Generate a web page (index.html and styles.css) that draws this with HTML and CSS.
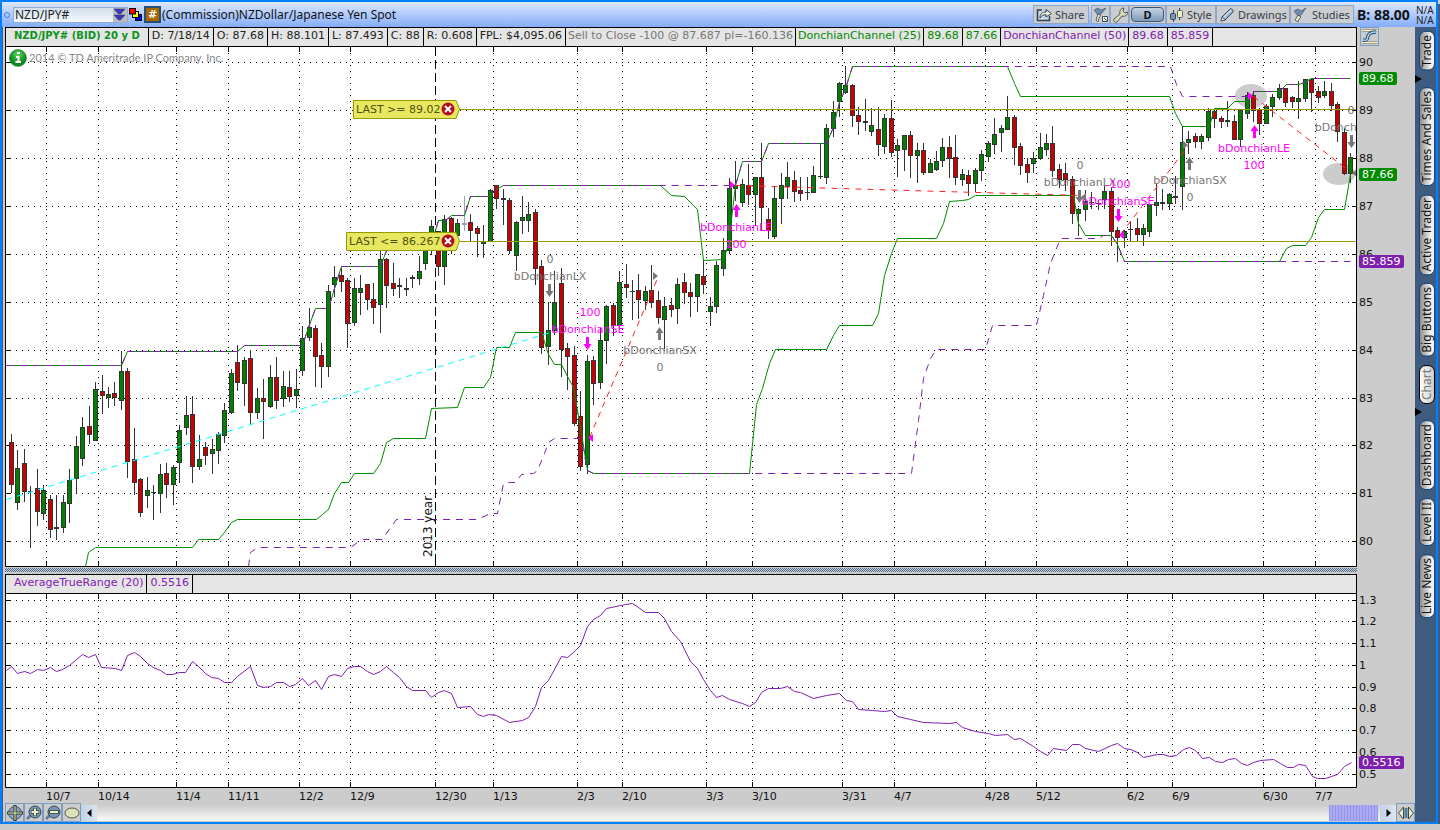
FILE: index.html
```html
<!DOCTYPE html>
<html lang="en">
<head>
<meta charset="utf-8">
<title>NZD/JPY# Chart</title>
<link rel="stylesheet" href="styles.css">
</head>
<body>
<div class="window">
  <header class="titlebar">
    <span class="link-dot"></span>
    <div class="symbol">
      <input class="symbol-input" type="text" value="NZD/JPY#" aria-label="Symbol">
      <button class="symbol-drop" aria-label="Symbol list"><svg width="13" height="13" viewBox="0 0 13 13"><path d="M1 1h11l-4.500 5h-2zM1 7h11l-4.500 5h-2z" fill="#3a3ab8" stroke="#2a2a80" stroke-width=".5"/></svg></button>
    </div>
    <svg class="squares" width="13" height="13" viewBox="0 0 13 13"><rect x="6.500" y="6.500" width="6" height="6" fill="#00f" stroke="#000"/><rect x="3.500" y="3.500" width="6" height="6" fill="#ff0" stroke="#000"/><rect x=".5" y=".5" width="6" height="5.500" fill="#f00" stroke="#000"/></svg>
    <button class="hash">#</button>
    <h1 class="title">(Commission)NZDollar/Japanese Yen Spot</h1>
    <nav class="tools">
      <button class="tool share"><svg width="16" height="14" viewBox="0 0 16 14"><path d="M6 2H1.500v10.500h12V8" fill="#c9d6e4" stroke="#2d4256" stroke-width="1.500"/><path d="M4 10c0-4 2-6 6-6V1.500L15.300 5.500 10 9V6.700c-3 0-4.500 1-6 3.300z" fill="#f2f4dc" stroke="#2d4256"/></svg>Share</button>
      <button class="tool icon" aria-label="Edit studies"><svg width="16" height="16" viewBox="0 0 16 16"><path d="M1 3l4-2 3 2 5-2-5 6-3 1z" fill="#6f8ca8" stroke="#4a6178" stroke-width=".8"/><path d="M5 7l3 1-2 3-1 4-2-2z" fill="#e8ecc4" stroke="#31475c" stroke-width=".8"/><path d="M9.500 9.500h5v5h-5z" fill="#f4f4d8" stroke="#31475c"/><path d="M11 11l2.500 2.500" stroke="#31475c"/></svg></button>
      <button class="tool icon" aria-label="Settings"><svg width="16" height="16" viewBox="0 0 16 16"><path d="M2 12l6-5c-1-3 1-6 4-6l-1 3 2 2 3-1c0 3-3 5-6 4l-5 6c-2 1-4-1-3-3z" fill="#d8dcb4" stroke="#4d5b62"/></svg></button>
      <button class="tool period"><span>D</span></button>
      <button class="tool style-btn"><svg width="15" height="16" viewBox="0 0 15 16"><path d="M4.500 3v12M10.500 1v12" stroke="#31475c"/><rect x="1.500" y="6.500" width="5" height="6" rx="1" fill="#7795b2" stroke="#31475c"/><rect x="8.500" y="3.500" width="5" height="7" rx="1" fill="#eceec8" stroke="#5a6a60"/></svg>Style</button>
      <button class="tool drawings"><svg width="16" height="16" viewBox="0 0 16 16"><path d="M2 14l1-4 8-8c1-1 4 1 3 3l-8 8z" fill="#9fb9d4" stroke="#31475c"/><path d="M2 14l1-4 3 3z" fill="#f2e8c4" stroke="#31475c" stroke-width=".7"/><path d="M5 10l7-7" stroke="#e6f0fa"/></svg>Drawings</button>
      <button class="tool studies"><svg width="16" height="16" viewBox="0 0 16 16"><path d="M1 4l4-2 3 2 5-3-5 7-3 1z" fill="#6f8ca8" stroke="#4a6178" stroke-width=".8"/><path d="M5 8l3 2-2 2-1 3-3-2z" fill="#e8ecc4" stroke="#31475c" stroke-width=".8"/></svg>Studies</button>
    </nav>
    <strong class="bid">B: 88.00</strong>
    <div class="na"><span>N/A</span><span>N/A</span></div>
  </header>

  <main class="body">
    <section class="charts">
      <div class="inforow">
        <div class="info">
          <span class="cell sym">NZD/JPY# (BID) 20 y D</span><span class="cell">D: 7/18/14</span><span class="cell">O: 87.68</span><span class="cell">H: 88.101</span><span class="cell">L: 87.493</span><span class="cell">C: 88</span><span class="cell">R: 0.608</span><span class="cell">FPL: $4,095.06</span><span class="cell tight dim">Sell to Close -100 @ 87.687 pl=-160.136</span><span class="cell tight green">DonchianChannel (25)</span><span class="cell green">89.68</span><span class="cell green">87.66</span><span class="cell tight purple">DonchianChannel (50)</span><span class="cell purple">89.68</span><span class="cell purple">85.859</span>
        </div>
        <div class="corner"><button class="scale-btn" aria-label="Fit scale"><svg width="17" height="17" viewBox="0 0 17 17"><path d="M1 2.500h15M1 14.500h15" stroke="#6b7458" stroke-width="2"/><path d="M1 2.500h15M1 14.500h15" stroke="#f4f4c8"/><path d="M2 12c5 1 4-1 5-4s3-4 8-4" fill="none" stroke="#27506f" stroke-width="3.500"/><path d="M2 12c5 1 4-1 5-4s3-4 8-4" fill="none" stroke="#a9d2ee" stroke-width="1.500"/></svg></button></div>
      </div>
      <svg class="plot" id="price" viewBox="5 47 1410 520"></svg>
      <div class="splitter"></div>
      <div class="inforow lower">
        <div class="info"><span class="cell purple first">AverageTrueRange (20)</span><span class="cell purple">0.5516</span></div>
        <div class="corner"></div>
      </div>
      <svg class="plot" id="atr" viewBox="5 594 1410 209"></svg>
      <footer class="bottombar">
        <button class="zoom" aria-label="Crosshair"><svg width="16" height="16" viewBox="0 0 16 16"><circle cx="8" cy="8" r="6.500" fill="#8ba3bb" stroke="#3b5066"/><path d="M8 0v16M0 8h16" stroke="#2f3d33" stroke-width="3"/><path d="M8 1v14M1 8h14" stroke="#eef0c8"/></svg></button>
        <button class="zoom" aria-label="Zoom in"><svg width="16" height="16" viewBox="0 0 16 16"><path d="M1 14l4-4" stroke="#5f7f9f" stroke-width="3"/><circle cx="9" cy="7" r="6" fill="#7896b4" stroke="#33475c"/><path d="M9 3v8M5 7h8" stroke="#33473c" stroke-width="3.500"/><path d="M9 3.500v7M5.500 7h7" stroke="#eef0c8" stroke-width="2"/></svg></button>
        <button class="zoom" aria-label="Zoom out"><svg width="16" height="16" viewBox="0 0 16 16"><path d="M1 14l4-4" stroke="#5f7f9f" stroke-width="3"/><circle cx="9" cy="7" r="6" fill="#7896b4" stroke="#33475c"/><path d="M4 7h10" stroke="#33473c" stroke-width="3.500"/><path d="M5 7h8" stroke="#eef0c8" stroke-width="2"/></svg></button>
        <button class="zoom" aria-label="Pan"><svg width="16" height="16" viewBox="0 0 16 16"><ellipse cx="8" cy="8" rx="7" ry="5" fill="#dde2b8" stroke="#4b5a4b"/></svg></button>
        <button class="arrow" aria-label="Scroll left"><svg width="5" height="8" viewBox="0 0 5 8"><path d="M4.500 0v8L0 4z" fill="#000"/></svg></button>
        <div class="track"><div class="thumb"></div></div>
        <button class="arrow" aria-label="Scroll right"><svg width="5" height="8" viewBox="0 0 5 8"><path d="M.5 0v8L5 4z" fill="#000"/></svg></button>
        <button class="zoom last" aria-label="Expansion"><svg width="16" height="14" viewBox="0 0 16 14"><path d="M5.500 1v12L.5 7zM10.500 1v12l5-6z" fill="#eaeec8" stroke="#3c4a44"/><path d="M8 2v10" stroke="#4f7ba5" stroke-width="3"/></svg></button>
      </footer>
    </section>
    <aside class="tabs">
      <button class="tab">Trade</button>
      <span class="marker"></span>
      <button class="tab">Times And Sales</button>
      <button class="tab">Active Trader</button>
      <button class="tab">Big Buttons</button>
      <button class="tab active">Chart</button>
      <span class="marker"></span>
      <button class="tab">Dashboard</button>
      <button class="tab">Level II</button>
      <button class="tab">Live News</button>
    </aside>
  </main>
</div>
<script src="chart.js"></script>
</body>
</html>
```
FILE: styles.css
```css
* { box-sizing: border-box; }
body { margin: 0; background: #ccc; font-family: "DejaVu Sans", sans-serif; font-size: 11px; color: #222; }
button { font: inherit; margin: 0; padding: 0; border: 0; background: none; color: inherit; }
svg { display: block; flex: none; }
.window { margin-right: 2px; border: 2px solid #0080ff; box-shadow: 0 4px 0 #3f5c80, 2px 4px 0 #3f5c80, inset 1px 0 0 #3f5c80; background: #ccc; }

.titlebar { display: flex; align-items: center; height: 25px; padding-left: 2px; background: linear-gradient(#dce8ff, #84adf8); font-family: "Noto Sans", sans-serif; font-size: 12px; }
.link-dot { width: 6px; height: 6px; border: 1px solid #3f84dc; border-radius: 50%; }
.symbol { display: flex; align-items: center; width: 115px; height: 16px; margin-left: 3px; margin-right: 1px; border: 1px solid #91acd0; background: linear-gradient(#d4dfeb, #f4f8fc); }
.symbol-input { flex: 1; min-width: 0; height: 14px; padding: 0 1px; border: 0; background: none; font: 12px "Noto Sans", sans-serif; color: #222; }
.symbol-drop { width: 14px; height: 14px; background: #bcbcbc; }
.hash { width: 17px; height: 17px; margin: 0 1px 0 2px; border: 2px solid #274d78; background: #a86800; color: #fff; font: bold 11px/12px "DejaVu Sans", sans-serif; }
.title { flex: 1; margin: 0; font-size: 12px; font-weight: normal; white-space: nowrap; color: #111; }
.tools { display: flex; }
.tool { display: flex; align-items: center; gap: 3px; height: 19px; border: 1px solid #8fa6c4; background: #cbcdd0; color: #333d4a; font-size: 11px; white-space: nowrap; padding: 0 2px; }
.share { width: 56px; margin-right: 2px; }
.tool.icon { width: 19px; padding: 0 1px; }
.period { width: 37px; padding: 0; }
.period span { width: 33px; height: 15px; margin: 0 auto; border: 1px solid #3f5770; border-radius: 4px; background: linear-gradient(#c4d2e2, #7f9cba); color: #111; font-weight: bold; line-height: 13px; }
.style-btn { width: 50px; }
.drawings { width: 74px; }
.studies { width: 64px; }
.bid { width: 62px; padding-left: 3px; font-size: 14px; color: #111; white-space: nowrap; }
.na { display: flex; flex-direction: column; width: 20px; font-size: 10px; line-height: 10px; }

.body { display: flex; }
.charts { flex: 1; min-width: 0; padding-left: 3px; }
.inforow { display: flex; height: 20px; }
.info { flex: 1; display: flex; min-width: 0; border: 1px solid #000; background: #e5e5e5; overflow: hidden; }
.cell { padding: 0 3px; border-right: 1px solid #000; line-height: 16px; white-space: nowrap; }
.tight { padding: 0 2px; }
.sym { padding: 0 8px; font-size: 10px; font-weight: bold; color: #0b9420; }
.first { padding-left: 8px; }
.dim { color: #777; }
.green { color: #008a00; }
.purple { color: #8020b0; }
.corner { width: 58px; padding-left: 3px; }
.scale-btn { width: 19px; height: 19px; border: 1px solid #7f9dc0; }
.plot { width: 100%; height: auto; }
.plot text { font-family: "DejaVu Sans", sans-serif; font-size: 11px; }
.plot .note { font-family: Lato, sans-serif; fill: #888; }
.plot .year { font-size: 12px; }
.splitter { height: 4px; margin: 1px 58px 2px 0; background: repeating-conic-gradient(#4d6c94 0 25%, #ccc 0 50%) 0 0 / 2px 2px; }

.bottombar { display: flex; align-items: center; height: 19px; }
.zoom { display: flex; align-items: center; justify-content: center; width: 19px; height: 19px; border: 1px solid #7f9dc0; }
.arrow { display: flex; align-items: center; justify-content: center; width: 16px; height: 16px; background: linear-gradient(90deg, #c3d2e6, #dbe5f1); }
.track { flex: 1; height: 16px; display: flex; justify-content: flex-end; padding-right: 2px; background: linear-gradient(#ccc, #fbfbfb); }
.thumb { width: 49px; background: repeating-linear-gradient(90deg, #9494e8 0 1px, #ababf4 1px 3px); }

.tabs { display: flex; flex-direction: column; align-items: center; gap: 8px; width: 21px; padding-top: 4px; padding-left: 3px; background: #3f5c80; }
.tab { width: 16px; padding: 3px 0; border: 1px solid #14457a; border-radius: 7px; background: linear-gradient(90deg, #f4f4f4 20%, #8f8f8f); writing-mode: vertical-rl; transform: rotate(180deg); font: 12px/14px "Noto Sans", sans-serif; color: #111; white-space: nowrap; }
.tab.active { border-color: #000; background: linear-gradient(90deg, #ccc, #fff); color: #777; }
.marker { align-self: flex-start; width: 0; height: 0; margin: -4px 0 -4px -3px; border: 4px solid transparent; border-left: 7px solid #000; border-right: 0; }
```
FILE: chart.js
```js
// Candles: high, body top, body bottom, low, kind (g up, r down, d flat, s pale)
const candles = `434 443 485 493r,450 469 503 510g,449 464 492 502r,486 491 492 548d,469 489 512 526r,485 491 514 520g,495 500 530 538r,495 527 529 540d,495 503 528 533g,469 481 504 523g,436 447 479 493g,417 428 459 466g,406 427 435 444r,382 390 441 441g,375 392 396 414r,387 395 398 408g,382 394 398 406r,351 372 401 410g,368 372 462 478r,428 460 483 495r,478 480 513 517r,477 491 496 508g,485 492 493 520d,464 475 494 513g,463 474 485 498r,465 468 485 505g,425 431 463 483g,396 416 428 435g,396 415 467 483r,435 460 467 470g,442 448 456 465r,439 450 454 474g,432 435 451 464g,403 411 436 443g,369 374 413 414g,345 363 383 391r,357 361 384 406g,350 359 413 424r,388 399 413 419g,379 399 402 439r,365 378 407 408g,357 378 401 409r,371 387 399 407g,371 388 397 402r,369 390 396 408g,
326 339 371 376g,308 328 338 341g,325 329 357 387r,343 356 367 388r,285 292 367 377g,266 278 285 297g,268 276 282 292r,278 281 324 348r,278 289 323 326g,275 289 293 315g,284 285 300 310r,283 300 308 324r,250 260 305 333g,258 260 286 308r,263 284 289 296r,278 285 287 298d,278 288 290 296d,275 277 279 288d,256 272 279 285g,245 248 264 270g,220 227 250 255g,232 232 267 276r,215 220 267 285g,217 219 245 254r,219 224 236 240g,196 223 225 231s,214 223 231 242r,226 229 234 257r,225 242 244 258g,189 191 242 242g,185 186 199 209r,189 198 200 225d,198 201 251 254r,221 223 256 271g,196 218 221 234g,202 215 221 232g,209 213 269 285r,
260 267 348 354r,302 331 347 365g,271 303 331 335g,268 284 350 377r,343 349 357 390r,346 356 424 426r,391 417 467 471r,355 362 465 474g,356 361 384 405r,328 341 383 389g,305 307 341 364g,303 306 326 336r,271 283 326 330g,264 285 288 298r,280 291 292 320d,274 291 300 319r,286 292 301 310g,265 291 303 308r,291 301 318 324r,297 307 320 349g,298 306 310 317r,278 285 309 324g,273 283 293 304r,283 293 297 317r,275 275 297 312g,260 277 285 294r,297 307 312 326g,261 266 307 313g,
238 251 269 276g,178 189 251 254g,161 186 189 201g,179 185 203 207g,164 186 195 205r,178 178 195 226g,143 178 208 231r,208 220 231 239r,186 199 237 239g,173 186 199 224g,162 178 187 199g,171 181 192 202r,177 191 194 201r,177 192 193 200d,166 176 193 193g,143 176 177 179d,124 129 178 184g,101 113 129 137g,82 84 102 117g,66 86 93 94g,84 86 116 127r,107 116 122 135r,99 121 123 131d,108 126 132 136g,107 130 145 156r,114 119 147 154g,100 119 153 157r,139 146 151 177g,135 136 150 171g,131 136 156 178r,143 151 156 183g,143 151 173 175r,159 164 173 173g,151 162 170 171g,138 148 161 167g,136 148 159 178r,135 158 178 185r,
169 175 180 186g,170 176 184 196r,168 171 184 192g,150 155 171 181g,141 144 157 162g,118 135 145 154g,125 129 133 152g,96 118 130 130g,115 118 148 165r,143 147 166 175r,158 165 173 183r,152 159 164 173g,133 148 159 160g,134 144 150 156g,126 144 171 177r,164 170 180 188r,163 174 180 191r,176 180 214 224r,208 210 214 236g,190 202 210 221g,192 202 203 209d,200 203 204 210d,186 192 200 209g,187 192 232 246r,227 231 238 262r,230 232 238 248g,222 229 230 241d,218 229 235 241r,224 229 235 246g,204 205 232 237g,184 203 206 216g,189 202 204 210d,193 195 204 210g,176 196 198 204d,126 143 187 210g,
131 140 143 154g,133 137 142 148r,134 137 142 149g,108 112 138 141g,109 112 119 128r,116 119 122 128r,101 120 122 127d,115 122 140 140r,110 111 140 147g,92 96 114 119g,91 96 111 122r,108 110 124 135r,104 107 124 124g,94 98 107 117g,84 89 98 100g,88 89 103 107r,96 98 102 108r,81 99 102 119g,79 80 99 102g,78 80 93 112r,86 92 98 103r,81 92 96 98g,83 92 106 111r,102 105 132 142r,128 133 174 175r,153 158 174 183g`.replace(/\n/g, '').split(',').map(s => [...s.slice(0, -1).split(' ').map(Number), s.slice(-1)]);

const shared = '6,365 121,365 127,351 237,351 244,345 302,345 308,327 315,308 328,308 334,288 341,266 380,266 386,250 430,241 435,230 438,220 445,220 451,215 464,215 470,196 489,196 496,189 503,185';
const climb = '735,185 742,161 761,161 768,143 826,143 832,129 839,102 845,88 852,66';
const tail = '1254,91 1279,91 1286,84 1298,84 1304,82 1311,78 1350,78';
const upper25 = `${shared} 660,185 671,195 684,196 697,209 703,260 723,259 727,247 730,227 ${climb} 1007,66 1014,83 1020,96 1169,96 1175,113 1182,126 1209,126 1214,108 1227,108 1234,101 1247,101 ${tail}`;
const upper50 = `${shared} ${climb} 1170,66 1176,84 1182,96 1249,96 ${tail}`;
const lower25 = '85,566 88,552 95,547 192,547 198,539 218,539 224,532 231,522 237,519 316,519 322,514 328,509 334,493 341,482 348,482 354,473 373,473 380,463 386,442 393,438 425,438 431,408 457,407 464,387 483,387 490,377 496,347 509,347 515,332 541,332 548,354 554,364 561,364 567,376 573,387 580,427 587,470 593,473 749,473 756,404 762,388 769,363 775,349 826,349 833,335 839,325 872,325 878,313 884,275 891,253 897,238 936,238 943,223 949,201 962,200 968,199 975,195 1073,195 1078,223 1085,235 1111,235 1117,244 1124,261 1279,261 1286,248 1292,245 1305,245 1311,237 1318,217 1324,209 1344,209 1350,174';
const lower50 = '248,566 250,552 257,547 350,547 357,542 363,539 382,539 390,527 396,519 477,519 490,513 497,513 503,483 509,482 515,482 521,474 533,473 537,470 544,453 548,442 554,438 580,438 583,450 587,470 593,473 911,473 918,420 923,378 930,358 936,349 985,349 992,325 1036,325 1043,295 1050,263 1058,243 1060,238 1098,238 1103,235 1111,235 1117,244 1124,261 1350,261';
const atr = '6,670 11,666 17,673 24,671 30,673 37,669 43,670 50,667 56,671 62,669 69,665 75,660 82,654 88,657 95,654 101,667 115,668 121,670 127,655 134,652 140,656 147,663 153,667 160,670 166,674 172,674 179,672 185,672 192,661 198,666 205,673 211,677 218,678 224,682 231,682 237,676 250,666 257,685 263,687 270,686 276,682 283,682 289,686 295,684 302,678 308,685 315,680 321,689 328,676 334,674 341,676 347,668 354,666 360,666 367,671 373,674 380,671 386,666 393,672 399,677 406,686 412,690 425,690 431,697 438,692 444,690 451,693 457,707 470,706 477,714 483,716 488,714 496,715 509,722 522,720 528,717 535,706 541,687 548,680 561,656 567,657 574,651 580,645 587,626 593,619 600,615 606,608 625,604 632,603 638,607 645,612 658,612 664,618 671,631 680,641 690,661 697,668 703,679 710,690 716,697 722,695 729,699 742,703 749,706 755,702 761,692 768,688 780,688 787,686 794,691 800,692 813,698 826,695 839,693 846,700 852,701 858,709 872,710 884,711 891,710 897,716 910,719 923,722 949,723 956,722 962,727 975,731 988,733 995,735 1007,734 1014,739 1020,738 1033,746 1040,751 1047,755 1053,748 1066,750 1072,744 1079,744 1085,748 1098,751 1111,745 1117,743 1124,748 1130,749 1137,752 1143,757 1157,754 1163,754 1169,756 1176,755 1183,749 1189,747 1195,750 1202,758 1209,757 1215,761 1222,762 1228,759 1235,758 1241,763 1247,765 1253,762 1260,760 1273,759 1280,763 1287,767 1293,767 1298,764 1305,765 1312,776 1317,778 1325,778 1331,776 1337,774 1344,766 1351,762';
const dates = [[46,'10/7'],[98,'10/14'],[176,'11/4'],[228,'11/11'],[299,'12/2'],[350,'12/9'],[435,'12/30'],[493,'1/13'],[577,'2/3'],[622,'2/10'],[706,'3/3'],[752,'3/10'],[842,'3/31'],[894,'4/7'],[985,'4/28'],[1036,'5/12'],[1127,'6/2'],[1172,'6/9'],[1263,'6/30'],[1315,'7/7']];

const GREEN = '#008c00', PURPLE = '#7f1fb0', PINK = '#ff00ff', GRAY = '#777';
const half = pts => pts.replace(/\d+/g, n => +n + .5);
const poly = (pts, color, dash) => `<polyline points="${half(pts)}" fill="none" stroke="${color}"${dash ? ` stroke-dasharray="${dash}"` : ''}/>`;
const seg = (x1, y1, x2, y2, color, dash) => poly(`${x1},${y1} ${x2},${y2}`, color, dash);
const path = (d, dash) => `<path d="${d}" fill="none" stroke="#000"${dash ? ` stroke-dasharray="${dash}"` : ''}/>`;
const text = (x, y, s, color, anchor = 'start') => `<text x="${x}" y="${y}" fill="${color}" text-anchor="${anchor}">${s}</text>`;

function frame(top, bottom, rows) {
  let out = `<rect x="5" y="${top}" width="1352" height="${bottom - top}" fill="#fff"/>`;
  rows.forEach(([y, label]) => {
    out += path(`M16 ${y + .5}H1350`, '1 5') + path(`M6 ${y + .5}h5M1352 ${y + .5}h5`) + text(1359, y + 4, label, '#111');
  });
  dates.forEach(([x]) => {
    const long = x === 435 && top < 500;
    out += path(`M${x + .5} ${top}V${bottom}`, long ? '9 4' : '1 5') + path(`M${x + .5} ${top}v5M${x + .5} ${bottom - 5}v5`);
  });
  return out;
}
const border = (top, bottom) => path(`M5.500 ${top}V${bottom + .5}H1356.500V${top}`);
const tag = (y, s, color, w) => `<rect x="1359" y="${y - 6}" width="${w}" height="13" rx="2" fill="${color}"/>` + text(1362, y + 4, s, '#fff');

function arrow(x, y, dir, color) {
  const d = dir === 'up' ? `M${x} ${y}l4 6h-2.500v7h-3v-7h-2.500z` : `M${x} ${y + 13}l4-6h-2.500v-7h-3v7h-2.500z`;
  return `<path d="${d}" fill="${color}"/>`;
}
const tri = (x, y, dir, color) => `<path d="M${x} ${y}l${-5 * dir}-4v8z" fill="${color}"/>`;

function alertTag(x, y, s) {
  return `<path d="M${x + .5} ${y - 8.5}H456L459.500 ${y}L456 ${y + 9.5}H${x + .5}z" fill="#e8e860" stroke="#999900"/>` + text(x + 3, y + 4, s, '#50500a') +
    `<circle cx="448" cy="${y}" r="6.500" fill="#b01020"/><path d="M445 ${y - 3}l6 6m0-6l-6 6" stroke="#fff" stroke-width="2"/>`;
}

function drawPrice() {
  const rows = [62, 110, 158, 206, 254, 302, 350, 398, 445, 493, 541].map((y, i) => [y, 90 - i]);
  let out = frame(47, 566, rows);
  out += '<ellipse cx="1251" cy="96" rx="16" ry="12" fill="#ccc"/><ellipse cx="1339" cy="174" rx="16" ry="11" fill="#ccc"/>';
  candles.forEach(([h, t, b, l, k], i) => {
    const x = Math.round(11 + i * 6.4686), ink = k === 's' ? '#91a3b5' : '#333';
    out += `<path d="M${x + .5} ${h}V${l}" stroke="${ink}"/>`;
    if (k === 'd' || k === 's') out += `<rect x="${x - 2}" y="${t}" width="5" height="${Math.max(1, b - t)}" fill="${ink}"/>`;
    else out += `<rect x="${x - 1.5}" y="${t - .5}" width="4" height="${Math.max(1, b - t)}" fill="${k === 'g' ? '#008000' : '#c80000'}" stroke="#333"/>`;
  });
  out += poly(upper25, GREEN) + poly(upper50, PURPLE, '7 6') + poly(lower25, GREEN) + poly(lower50, PURPLE, '7 6');
  out += seg(6, 499, 550, 332, '#0ff', '6 5');
  out += seg(589, 437, 657, 278, '#f22', '6 5') + seg(735, 185, 1081, 195, '#f22', '6 6') + seg(1120, 234, 1188, 145, '#f22', '6 5') + seg(1253, 96, 1348, 170, '#f22', '6 5');
  out += seg(459, 109, 1355, 109, '#999900') + seg(459, 241, 1355, 241, '#999900');
  out += alertTag(353, 109, 'LAST &gt;= 89.02') + alertTag(346, 241, 'LAST &lt;= 86.267');

  const marks = [
    [550, 280, 'bDonchianLX', GRAY, '0', 263, 'down', 549, 284],
    [588, 333, 'bDonchianSE', PINK, '-100', 316, 'down', 587, 337],
    [660, 354, 'bDonchianSX', GRAY, '0', 371, 'up', 659, 327],
    [736, 231, 'bDonchianLE', PINK, '100', 248, 'up', 736, 204],
    [1080, 186, 'bDonchianLX', GRAY, '0', 169, 'down', 1079, 190],
    [1118, 205, 'bDonchianSE', PINK, '-100', 188, 'down', 1118, 209],
    [1190, 184, 'bDonchianSX', GRAY, '0', 201, 'up', 1189, 157],
    [1254, 152, 'bDonchianLE', PINK, '100', 169, 'up', 1254, 125],
    [1351, 131, 'bDonchianLX', GRAY, '0', 114, 'down', 1351, 135]
  ];
  out += '<clipPath id="plotArea"><rect x="6" y="47" width="1350" height="519"/></clipPath><g clip-path="url(#plotArea)">';
  marks.forEach(([x, y, name, c, qty, qy, dir, ax, ay]) => {
    out += text(x, y, name, c, 'middle') + text(x, qy, qty, c, 'middle') + arrow(ax + .5, ay, dir, c);
  });
  out += tri(658, 276, 1, GRAY) + tri(588, 438, -1, PINK) + tri(735, 185, 1, PINK) + tri(1081, 197, -1, GRAY) + tri(1119, 235, -1, PINK) + tri(1188, 145, 1, GRAY) + tri(1253, 96, 1, PINK) + tri(1352, 173, -1, GRAY) + '</g>';
  out += '<text class="year" transform="translate(432 557) rotate(-90)" fill="#111">2013 year</text>';
  out += '<text class="note" x="29" y="62">2014 © TD Ameritrade IP Company, Inc.</text>';
  out += '<defs><radialGradient id="orb" cy=".3"><stop offset="0" stop-color="#5fd66a"/><stop offset="1" stop-color="#0c8a1c"/></radialGradient></defs><circle cx="18" cy="58" r="8.500" fill="url(#orb)" stroke="#0a6a18" stroke-width=".5"/><path d="M16 57h2.500v5M15.500 62h5.500M17 53h3" stroke="#fff" stroke-width="2" fill="none"/>';
  out += border(47, 566) + tag(78, '89.68', GREEN, 38) + tag(174, '87.66', GREEN, 38) + tag(261, '85.859', PURPLE, 45);
  document.getElementById('price').innerHTML = out;
}

function drawAtr() {
  const rows = [600, 621, 643, 665, 687, 708, 730, 752, 774].map((y, i) => [y, String(+(1.3 - i / 10).toFixed(1))]);
  let out = frame(594, 787, rows) + poly(atr, PURPLE) + border(594, 787) + tag(762, '0.5516', PURPLE, 45);
  dates.forEach(([x, s]) => { out += text(x, 800, s, '#111'); });
  document.getElementById('atr').innerHTML = out;
}
drawPrice();
drawAtr();
```
